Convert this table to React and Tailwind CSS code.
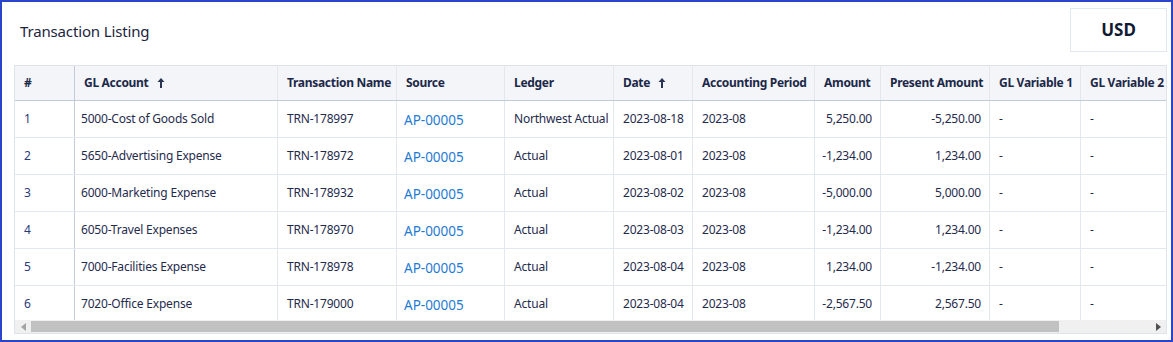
import React from 'react';

const cols =
  'grid grid-cols-[60px_203px_119px_108px_109px_79px_122px_66px_109px_91px_200px]';

const rows = [
  { id: 1, account: '5000-Cost of Goods Sold', name: 'TRN-178997', ledger: 'Northwest Actual', date: '2023-08-18', amount: '5,250.00', present: '-5,250.00' },
  { id: 2, account: '5650-Advertising Expense', name: 'TRN-178972', ledger: 'Actual', date: '2023-08-01', amount: '-1,234.00', present: '1,234.00' },
  { id: 3, account: '6000-Marketing Expense', name: 'TRN-178932', ledger: 'Actual', date: '2023-08-02', amount: '-5,000.00', present: '5,000.00' },
  { id: 4, account: '6050-Travel Expenses', name: 'TRN-178970', ledger: 'Actual', date: '2023-08-03', amount: '-1,234.00', present: '1,234.00' },
  { id: 5, account: '7000-Facilities Expense', name: 'TRN-178978', ledger: 'Actual', date: '2023-08-04', amount: '1,234.00', present: '-1,234.00' },
  { id: 6, account: '7020-Office Expense', name: 'TRN-179000', ledger: 'Actual', date: '2023-08-04', amount: '-2,567.50', present: '2,567.50' },
];

function SortArrow() {
  return (
    <svg width="8" height="10" viewBox="0 0 8 10" className="ml-[8px] inline-block">
      <path d="M4 0 L7.5 4 L5 4 L5 10 L3 10 L3 4 L0.5 4 Z" fill="#2a3556" />
    </svg>
  );
}

const cell = 'flex items-center border-r border-[#e3e7ee] px-[9px] whitespace-nowrap overflow-hidden';

export default function App() {
  return (
    <div
      className="w-[1173px] h-[342px] border-2 border-[#2a45c9] bg-white text-[#1f2b4d]"
      style={{ fontFamily: '"Noto Sans", "Open Sans", sans-serif' }}
    >
      {/* header */}
      <div className="flex items-start justify-between pl-[18px] pr-[4px] pt-[6px]">
        <h1 className="mt-[13px] text-[15px] leading-5 tracking-[-0.15px] text-[#1c2540]">Transaction Listing</h1>
        <div className="flex h-[44px] w-[97px] items-center justify-center border border-[#e3e7ee] text-[17px] font-bold text-[#111a33]">
          USD
        </div>
      </div>

      {/* table */}
      <div className="ml-[12px] mt-[13px] w-[1153px] border border-[#dfe3eb]">
        <div className="h-[254px] overflow-hidden">
          <div className={`${cols} h-[35px] border-b border-[#c3cad8] bg-[#f3f5f9] text-[12px] font-bold tracking-[-0.3px] text-[#1c2848]`}>
            <div className={`${cell} border-r-[#c3cad8]`}>#</div>
            <div className={cell}>GL Account<SortArrow /></div>
            <div className={cell}>Transaction Name</div>
            <div className={cell}>Source</div>
            <div className={cell}>Ledger</div>
            <div className={cell}>Date<SortArrow /></div>
            <div className={cell}>Accounting Period</div>
            <div className={cell}>Amount</div>
            <div className={cell}>Present Amount</div>
            <div className={cell}>GL Variable 1</div>
            <div className={cell}>GL Variable 2</div>
          </div>
          {rows.map((r) => (
            <div key={r.id} className={`${cols} h-[37px] border-b border-[#e3e7ee] text-[12px] tracking-[-0.2px]`}>
              <div className={`${cell} border-r-[#c3cad8] text-[#2b3b7a]`}>{r.id}</div>
              <div className={`${cell} pl-[6px]`}>{r.account}</div>
              <div className={cell}>{r.name}</div>
              <div className={`${cell} pl-[7px] pt-[3px] text-[13.5px] tracking-normal text-[#1f7ad3]`}>AP-00005</div>
              <div className={cell}>{r.ledger}</div>
              <div className={cell}>{r.date}</div>
              <div className={cell}>2023-08</div>
              <div className={`${cell} justify-end pr-[8px]`}>{r.amount}</div>
              <div className={`${cell} justify-end pr-[8px]`}>{r.present}</div>
              <div className={cell}>-</div>
              <div className={cell}>-</div>
            </div>
          ))}
        </div>

        {/* horizontal scrollbar */}
        <div className="flex h-[13px] items-center bg-[#f0f0f0]">
          <div className="flex w-[16px] items-center justify-center">
            <svg width="5" height="8" viewBox="0 0 5 8">
              <path d="M5 0 L0 4 L5 8 Z" fill="#a3a3a3" />
            </svg>
          </div>
          <div className="flex flex-1 items-center">
            <div className="h-[11px] w-[1028px] bg-[#c1c1c1]" />
          </div>
          <div className="flex w-[16px] items-center justify-center">
            <svg width="5" height="8" viewBox="0 0 5 8">
              <path d="M0 0 L5 4 L0 8 Z" fill="#505050" />
            </svg>
          </div>
        </div>
      </div>
    </div>
  );
}
